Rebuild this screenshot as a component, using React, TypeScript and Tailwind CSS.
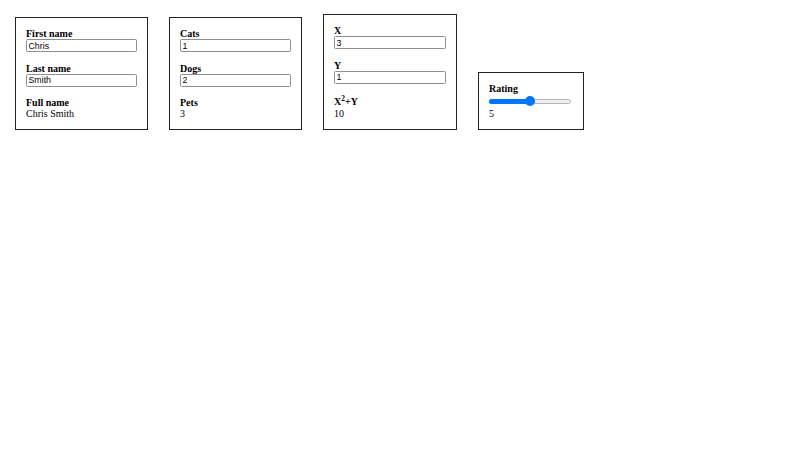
import React from 'react';

function Field({ label, value }: { label: React.ReactNode; value: string }) {
  return (
    <div className="flex flex-col">
      <label className="font-bold leading-[11px]">{label}</label>
      <input
        readOnly
        value={value}
        className="h-[13px] w-full rounded-[1.5px] border border-[#8f8f8f] bg-white px-[1.5px] font-['Liberation_Sans',Arial,sans-serif] text-[8.8px] leading-none text-black outline-none"
      />
    </div>
  );
}

function Output({ label, value }: { label: React.ReactNode; value: string }) {
  return (
    <div className="flex flex-col">
      <div className="font-bold leading-[11px]">{label}</div>
      <div className="leading-[11px]">{value}</div>
    </div>
  );
}

function Card({ width, children }: { width: string; children: React.ReactNode }) {
  return (
    <div className={`flex flex-col gap-[10.5px] border border-[#222] p-[10px] ${width}`}>
      {children}
    </div>
  );
}

export default function App() {
  return (
    <div className="min-h-[450px] bg-white font-['Liberation_Serif','Times_New_Roman',serif] text-[10px] text-black">
      <div className="flex items-end gap-[21px] pl-[15px] pt-[14px]">
        <Card width="w-[133px]">
          <Field label="First name" value="Chris" />
          <Field label="Last name" value="Smith" />
          <Output label="Full name" value="Chris Smith" />
        </Card>

        <Card width="w-[133px]">
          <Field label="Cats" value="1" />
          <Field label="Dogs" value="2" />
          <Output label="Pets" value="3" />
        </Card>

        <Card width="w-[134px]">
          <Field label="X" value="3" />
          <Field label="Y" value="1" />
          <Output
            label={
              <span className="inline-block pt-[2px]">
                X<span className="relative -top-[4px] text-[7.5px]">2</span>+Y
              </span>
            }
            value="10"
          />
        </Card>

        <div className="flex w-[106px] flex-col border border-[#222] p-[10px]">
          <div className="font-bold leading-[11px]">Rating</div>
          <div className="relative my-[1px] flex h-[12px] w-[82px] items-center">
            <div className="h-[5px] w-full rounded-full border border-[#b5b5b5] bg-[#efefef]" />
            <div className="absolute left-0 h-[5px] w-[41px] rounded-l-full bg-[#0075ff]" />
            <div className="absolute left-[36px] h-[10px] w-[10px] rounded-full bg-[#0075ff]" />
          </div>
          <div className="leading-[11px]">5</div>
        </div>
      </div>
    </div>
  );
}
